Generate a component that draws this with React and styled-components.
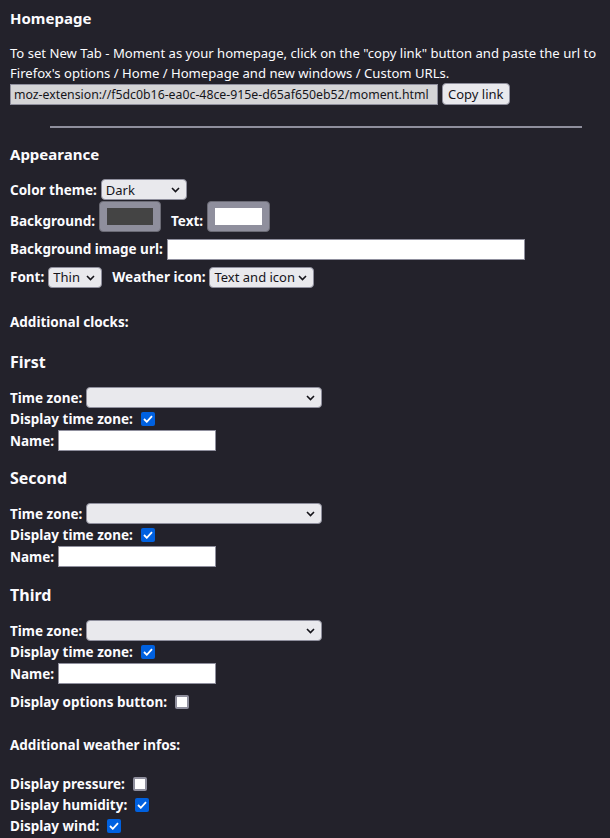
import React from "react"
import styled, { createGlobalStyle } from "styled-components"

const GlobalStyle = createGlobalStyle`
  html, body {
    margin: 0;
    padding: 0;
    background: #23222b;
  }
  body {
    color: #fbfbfe;
    font-family: "Noto Sans", "Open Sans", sans-serif;
    font-size: 13.4px;
  }
`

const Page = styled.div`
  width: 610px;
  height: 838px;
  overflow: hidden;
  padding: 0 10px;
  box-sizing: border-box;
`

const Heading = styled.h2`
  margin: ${p => p.$top || 0}px 0 0;
  font-size: 15px;
  font-weight: 700;
  line-height: 20px;
`

const SubHeading = styled.h3`
  margin: ${p => p.$top || 0}px 0 0;
  font-size: 16px;
  font-weight: 700;
  line-height: 20px;
`

const Intro = styled.p`
  margin: 16px 0 0;
  font-size: 13.1px;
  line-height: 19.5px;
  white-space: nowrap;
`

const Row = styled.div`
  display: flex;
  align-items: ${p => (p.$bottom ? "flex-end" : "center")};
  gap: ${p => p.$gap || 4}px;
  height: ${p => p.$h || 21}px;
  margin-top: ${p => p.$top || 0}px;
`

const Label = styled.label`
  font-weight: 700;
  font-size: 13.5px;
  line-height: 18px;
  white-space: nowrap;
  margin-left: ${p => p.$ml || 0}px;
  padding-bottom: ${p => p.$pb || 0}px;
`

const TextInput = styled.input`
  box-sizing: border-box;
  width: ${p => p.$w}px;
  height: 21px;
  border: 1px solid #8f8f9d;
  border-radius: 0;
  background: ${p => (p.readOnly ? "#d4d4d6" : "#ffffff")};
  color: #15141a;
  font-family: inherit;
  font-size: 12.3px;
  padding: 0 3px;
  margin: 0;
`

const Button = styled.button`
  box-sizing: border-box;
  height: 22px;
  padding: 0 5px;
  border: 1px solid #8f8f9d;
  border-radius: 4px;
  background: #e9e9ed;
  color: #15141a;
  font-family: inherit;
  font-size: 13px;
`

const Rule = styled.hr`
  margin: 21px 0 0 40px;
  width: 532px;
  border: 0;
  border-top: 2px solid #8f8f9d;
`

const SelectWrap = styled.span`
  position: relative;
  display: inline-block;
  width: ${p => p.$w}px;
  height: 21px;
`

const Select = styled.select`
  appearance: none;
  box-sizing: border-box;
  width: 100%;
  height: 100%;
  border: 1px solid #8f8f9d;
  border-radius: 4px;
  background: #e9e9ed;
  color: #15141a;
  font-family: inherit;
  font-size: 13px;
  padding: 0 14px 0 4px;
  margin: 0;
`

const Chevron = styled.svg`
  position: absolute;
  right: 7px;
  top: 8px;
  pointer-events: none;
`

const ColorBox = styled.span`
  display: inline-flex;
  box-sizing: border-box;
  width: ${p => p.$w || 62}px;
  height: 31px;
  padding: 6px 7px;
  border-radius: 4px;
  background: #8f8f9d;
  border: 1px solid #6b6b75;
`

const Swatch = styled.span`
  flex: 1;
  background: ${p => p.$color};
`

const CheckWrap = styled.span`
  position: relative;
  display: inline-block;
  width: 14px;
  height: 14px;
  margin-left: 4px;
`

const CheckBox = styled.input`
  appearance: none;
  box-sizing: border-box;
  width: 14px;
  height: 14px;
  margin: 0;
  border-radius: 2px;
  border: ${p => (p.checked ? "none" : "2px solid #8f8f9d")};
  background: ${p => (p.checked ? "#0061e0" : "#ffffff")};
`

const Tick = styled.svg`
  position: absolute;
  left: 2px;
  top: 3px;
  pointer-events: none;
`

function Dropdown({ width, value }) {
  return (
    <SelectWrap $w={width}>
      <Select defaultValue={value}>
        <option>{value}</option>
      </Select>
      <Chevron width="9" height="6" viewBox="0 0 9 6">
        <path d="M1 1l3.5 3.5L8 1" fill="none" stroke="#15141a" strokeWidth="1.6" />
      </Chevron>
    </SelectWrap>
  )
}

function Check({ checked }) {
  return (
    <CheckWrap>
      <CheckBox type="checkbox" checked={checked} readOnly />
      {checked ? (
        <Tick width="10" height="8" viewBox="0 0 10 8">
          <path d="M1 4l2.8 2.8L9 1.2" fill="none" stroke="#fff" strokeWidth="1.8" />
        </Tick>
      ) : null}
    </CheckWrap>
  )
}

function Clock({ title, top }) {
  return (
    <>
      <SubHeading $top={top}>{title}</SubHeading>
      <Row $top={15}>
        <Label>Time zone:</Label>
        <Dropdown width={236} value="" />
      </Row>
      <Row $h={22}>
        <Label>Display time zone:</Label>
        <Check checked />
      </Row>
      <Row>
        <Label>Name:</Label>
        <TextInput $w={158} />
      </Row>
    </>
  )
}

export default function App() {
  return (
    <Page>
      <GlobalStyle />
      <Heading $top={8}>Homepage</Heading>
      <Intro>
        To set New Tab - Moment as your homepage, click on the "copy link" button and paste the url to
        <br />
        Firefox's options / Home / Homepage and new windows / Custom URLs.
      </Intro>
      <Row $h={22}>
        <TextInput $w={428} readOnly value="moz-extension://f5dc0b16-ea0c-48ce-915e-d65af650eb52/moment.html" />
        <Button>Copy link</Button>
      </Row>
      <Rule />

      <Heading $top={16}>Appearance</Heading>
      <Row $top={15}>
        <Label>Color theme:</Label>
        <Dropdown width={86} value="Dark" />
      </Row>
      <Row $h={31} $top={1} $bottom>
        <Label $pb={2}>Background:</Label>
        <ColorBox>
          <Swatch $color="#444444" />
        </ColorBox>
        <Label $ml={6} $pb={2}>Text:</Label>
        <ColorBox $w={63}>
          <Swatch $color="#ffffff" />
        </ColorBox>
      </Row>
      <Row $h={22} $top={6}>
        <Label>Background image url:</Label>
        <TextInput $w={358} />
      </Row>
      <Row $h={22} $top={6}>
        <Label>Font:</Label>
        <Dropdown width={54} value="Thin" />
        <Label $ml={6}>Weather icon:</Label>
        <Dropdown width={105} value="Text and icon" />
      </Row>

      <Row $top={23}>
        <Label>Additional clocks:</Label>
      </Row>
      <Clock title="First" top={20} />
      <Clock title="Second" top={17} />
      <Clock title="Third" top={18} />
      <Row $top={7}>
        <Label>Display options button:</Label>
        <Check />
      </Row>
      <Row $top={22}>
        <Label>Additional weather infos:</Label>
      </Row>
      <Row $top={18}>
        <Label>Display pressure:</Label>
        <Check />
      </Row>
      <Row>
        <Label>Display humidity:</Label>
        <Check checked />
      </Row>
      <Row>
        <Label>Display wind:</Label>
        <Check checked />
      </Row>
    </Page>
  )
}
